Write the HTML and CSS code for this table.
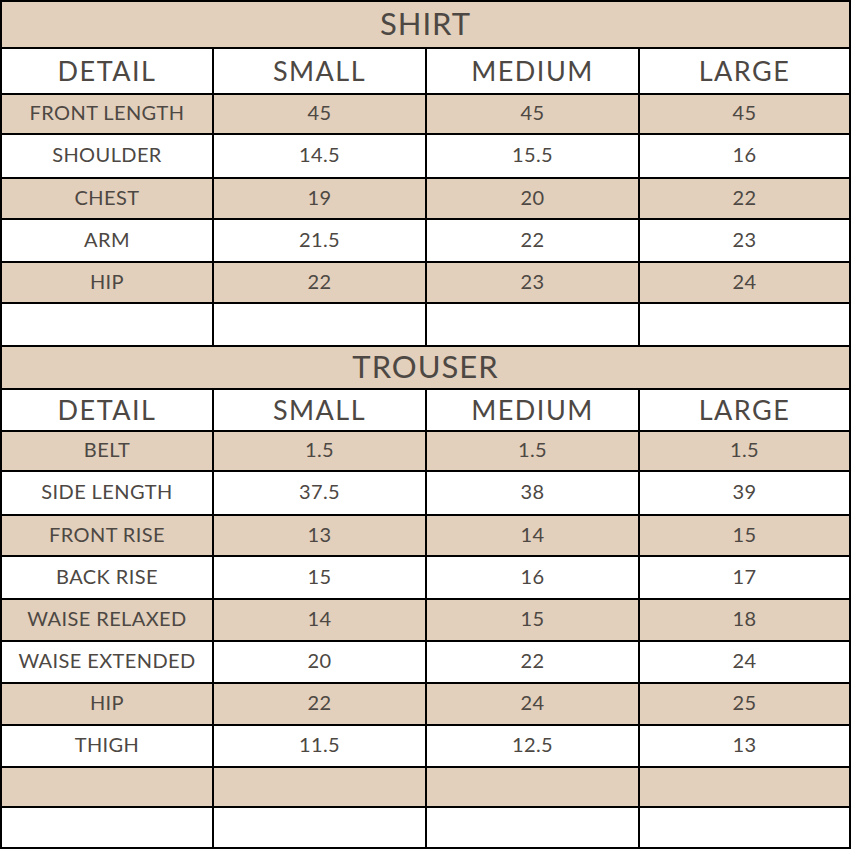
FILE: index.html
```html
<!DOCTYPE html>
<html lang="en">
<head>
<meta charset="utf-8">
<title>Size Chart</title>
<link rel="stylesheet" href="styles.css">
</head>
<body>
<div class="chart">
  <div class="cell title">SHIRT</div>
  <div class="cell head">DETAIL</div><div class="cell head">SMALL</div><div class="cell head">MEDIUM</div><div class="cell head">LARGE</div>
  <div class="cell b">FRONT LENGTH</div><div class="cell b">45</div><div class="cell b">45</div><div class="cell b">45</div>
  <div class="cell">SHOULDER</div><div class="cell">14.5</div><div class="cell">15.5</div><div class="cell">16</div>
  <div class="cell b">CHEST</div><div class="cell b">19</div><div class="cell b">20</div><div class="cell b">22</div>
  <div class="cell">ARM</div><div class="cell">21.5</div><div class="cell">22</div><div class="cell">23</div>
  <div class="cell b">HIP</div><div class="cell b">22</div><div class="cell b">23</div><div class="cell b">24</div>
  <div class="cell"></div><div class="cell"></div><div class="cell"></div><div class="cell"></div>
  <div class="cell title">TROUSER</div>
  <div class="cell head">DETAIL</div><div class="cell head">SMALL</div><div class="cell head">MEDIUM</div><div class="cell head">LARGE</div>
  <div class="cell b">BELT</div><div class="cell b">1.5</div><div class="cell b">1.5</div><div class="cell b">1.5</div>
  <div class="cell">SIDE LENGTH</div><div class="cell">37.5</div><div class="cell">38</div><div class="cell">39</div>
  <div class="cell b">FRONT RISE</div><div class="cell b">13</div><div class="cell b">14</div><div class="cell b">15</div>
  <div class="cell">BACK RISE</div><div class="cell">15</div><div class="cell">16</div><div class="cell">17</div>
  <div class="cell b">WAISE RELAXED</div><div class="cell b">14</div><div class="cell b">15</div><div class="cell b">18</div>
  <div class="cell">WAISE EXTENDED</div><div class="cell">20</div><div class="cell">22</div><div class="cell">24</div>
  <div class="cell b">HIP</div><div class="cell b">22</div><div class="cell b">24</div><div class="cell b">25</div>
  <div class="cell">THIGH</div><div class="cell">11.5</div><div class="cell">12.5</div><div class="cell">13</div>
  <div class="cell b"></div><div class="cell b"></div><div class="cell b"></div><div class="cell b"></div>
  <div class="cell"></div><div class="cell"></div><div class="cell"></div><div class="cell"></div>
</div>
</body>
</html>
```
FILE: styles.css
```css
html, body {
  margin: 0;
  padding: 0;
  background: #ffffff;
}
.chart {
  width: 851px;
  height: 849px;
  box-sizing: border-box;
  padding: 2px;
  background: #000;
  display: grid;
  gap: 2px;
  grid-template-columns: 210px 211px 211px 209px;
  grid-template-rows: 45px 44px 38px 42px 39px 41px 39px 41px 41px 40px 38px 42px 39px 41px 40px 40px 40px 40px 38px 39px;
  font-family: "Lato", "Liberation Sans", sans-serif;
  font-weight: 400;
  color: #4d4843;
}
.cell {
  background: #fff;
  display: flex;
  align-items: center;
  justify-content: center;
  box-sizing: border-box;
  padding-bottom: 4px;
  font-size: 20px;
  letter-spacing: 0.4px;
  white-space: nowrap;
}
.cell.b {
  background: #e2cfbc;
}
.title {
  grid-column: 1 / -1;
  background: #e2cfbc;
  font-size: 31px;
  letter-spacing: 1px;
  padding-bottom: 4px;
}
.head {
  font-size: 27px;
  letter-spacing: 1.5px;
  padding-bottom: 1px;
}
```
